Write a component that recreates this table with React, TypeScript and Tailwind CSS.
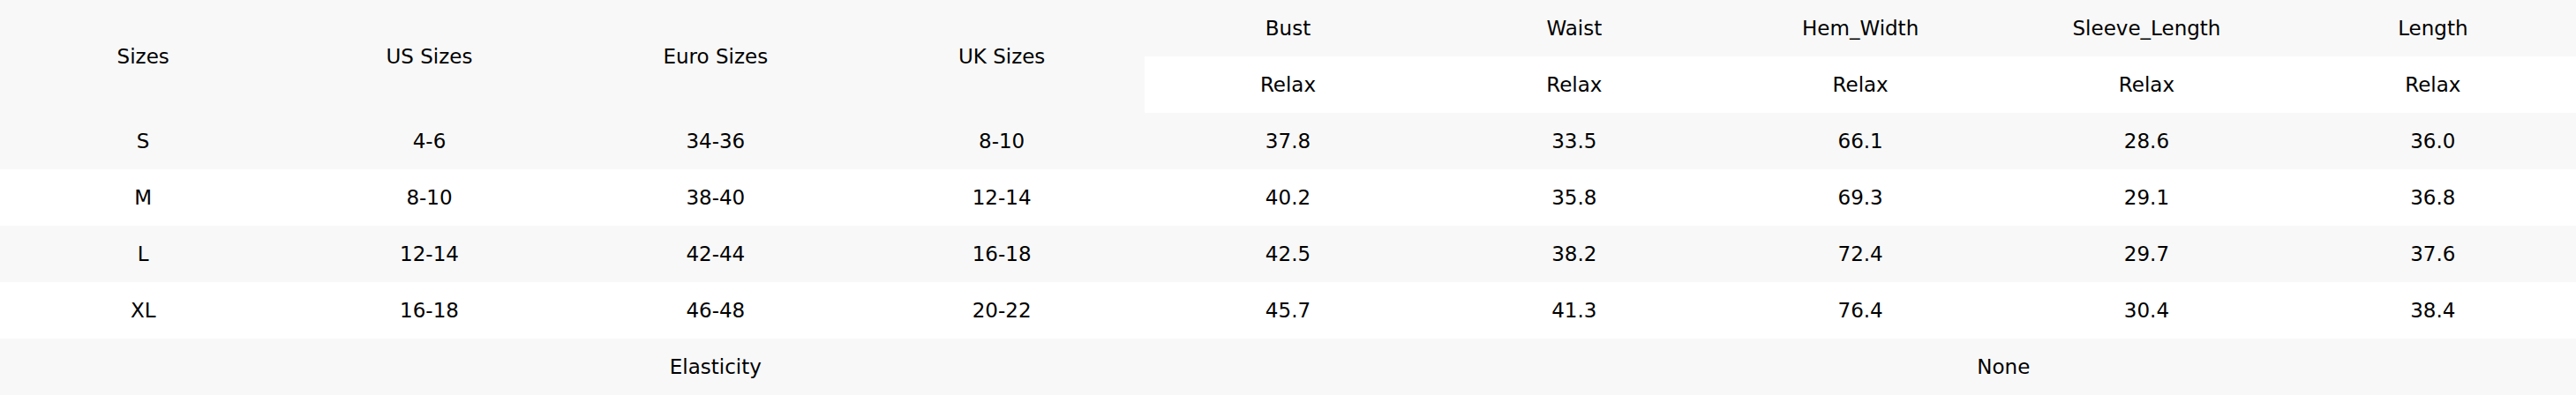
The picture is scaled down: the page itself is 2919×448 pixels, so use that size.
const measures = ["Bust", "Waist", "Hem_Width", "Sleeve_Length", "Length"]

const rows = [
  ["S", "4-6", "34-36", "8-10", "37.8", "33.5", "66.1", "28.6", "36.0"],
  ["M", "8-10", "38-40", "12-14", "40.2", "35.8", "69.3", "29.1", "36.8"],
  ["L", "12-14", "42-44", "16-18", "42.5", "38.2", "72.4", "29.7", "37.6"],
  ["XL", "16-18", "46-48", "20-22", "45.7", "41.3", "76.4", "30.4", "38.4"],
]

export default function App() {
  return (
    <div className="w-full bg-white text-black" style={{ fontFamily: '"DejaVu Sans", sans-serif' }}>
      <table className="w-full table-fixed border-collapse text-[23px] text-center">
        <thead>
          <tr className="bg-[#f8f8f8] h-16">
            <th rowSpan={2} className="font-normal">Sizes</th>
            <th rowSpan={2} className="font-normal">US Sizes</th>
            <th rowSpan={2} className="font-normal">Euro Sizes</th>
            <th rowSpan={2} className="font-normal">UK Sizes</th>
            {measures.map((m) => (
              <th key={m} className="font-normal">{m}</th>
            ))}
          </tr>
          <tr className="bg-white h-16">
            {measures.map((m) => (
              <th key={m} className="font-normal">Relax</th>
            ))}
          </tr>
        </thead>
        <tbody>
          {rows.map((r, i) => (
            <tr key={r[0]} className={i % 2 === 0 ? "bg-[#f8f8f8] h-16" : "bg-white h-16"}>
              {r.map((v, j) => (
                <td key={j}>{v}</td>
              ))}
            </tr>
          ))}
          <tr className="bg-[#f8f8f8] h-16">
            <td colSpan={5}>Elasticity</td>
            <td colSpan={4}>None</td>
          </tr>
        </tbody>
      </table>
    </div>
  )
}
